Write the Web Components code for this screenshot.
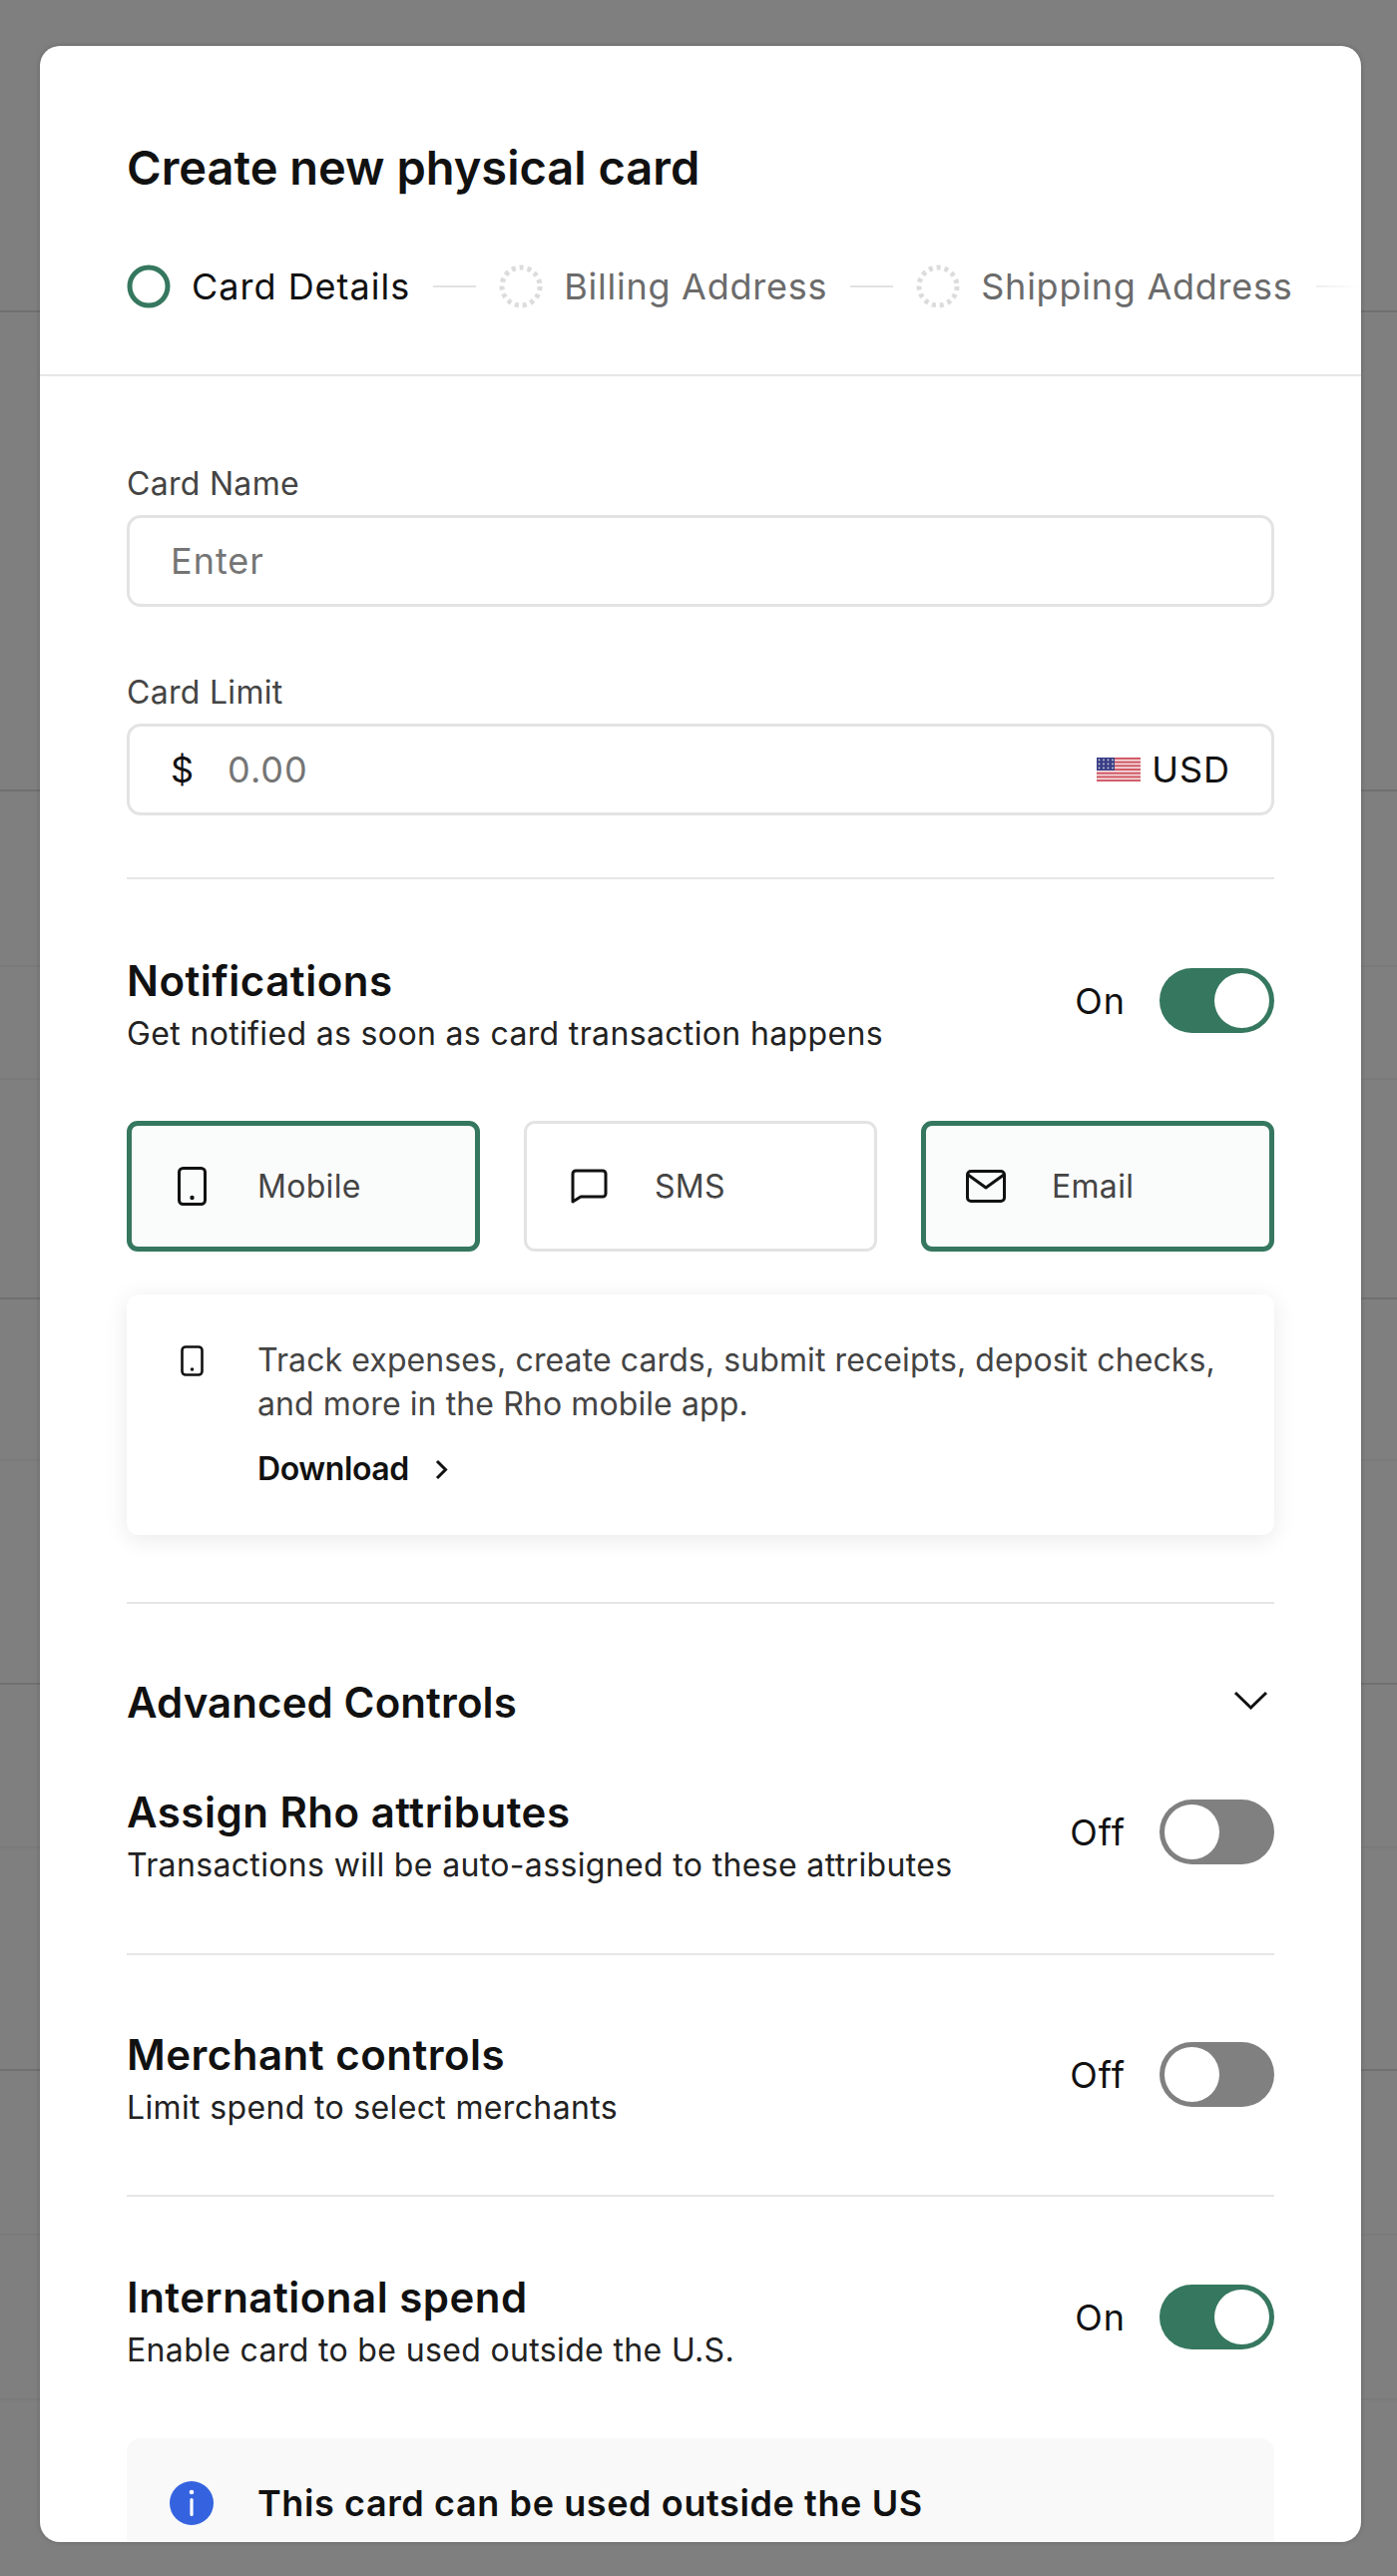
<!DOCTYPE html>
<html lang="en">
<head>
<meta charset="utf-8">
<title>Create new physical card</title>
<style>
  html, body { margin: 0; padding: 0; }
  body { font-family: Inter, "Liberation Sans", sans-serif; color: #111; }
  .rule { display: block; height: 2px; background: #e6e6e6; border: 0; margin: 0; }
</style>
</head>
<body>
<card-page>
  <page-backdrop></page-backdrop>
  <card-modal>
    <modal-header slot="header" title="Create new physical card">
      <step-item state="active" label="Card Details"></step-item>
      <step-line></step-line>
      <step-item label="Billing Address"></step-item>
      <step-line></step-line>
      <step-item label="Shipping Address"></step-item>
      <step-line fade></step-line>
    </modal-header>

    <form-field label="Card Name" placeholder="Enter" style="margin-top:86px"></form-field>
    <form-field label="Card Limit" placeholder="0.00" prefix="$" currency="USD" style="margin-top:64px"></form-field>
    <hr class="rule" style="margin-top:62px">

    <setting-row heading="Notifications" sub="Get notified as soon as card transaction happens" on style="margin-top:77px"></setting-row>
    <channel-group style="margin-top:65px">
      <channel-box selected label="Mobile"><svg slot="icon" width="29" height="39" viewBox="0 0 29 39" fill="none" stroke="#111" stroke-width="3"><rect x="1.5" y="1.5" width="26" height="36" rx="4"/><circle cx="14.5" cy="31" r="2.2" fill="#111" stroke="none"/></svg></channel-box>
      <channel-box label="SMS"><svg slot="icon" width="37" height="35" viewBox="0 0 37 35" fill="none" stroke="#111" stroke-width="3" stroke-linejoin="round"><path d="M2 5a3 3 0 0 1 3-3h27a3 3 0 0 1 3 3v20a3 3 0 0 1-3 3H10l-8 5z"/></svg></channel-box>
      <channel-box selected label="Email"><svg slot="icon" width="40" height="33" viewBox="0 0 40 33" fill="none" stroke="#111" stroke-width="3" stroke-linejoin="round"><rect x="1.5" y="1.5" width="37" height="30" rx="3.5"/><path d="M2 5l18 13L38 5"/></svg></channel-box>
    </channel-group>
    <app-promo style="margin-top:43px">
      Track expenses, create cards, submit receipts, deposit checks, and more in the Rho mobile app.
    </app-promo>
    <hr class="rule" style="margin-top:67px">

    <section-toggle heading="Advanced Controls" style="margin-top:74px"></section-toggle>
    <setting-row heading="Assign Rho attributes" sub="Transactions will be auto-assigned to these attributes" style="margin-top:60px"></setting-row>
    <hr class="rule" style="margin-top:66px">
    <setting-row heading="Merchant controls" sub="Limit spend to select merchants" style="margin-top:75px"></setting-row>
    <hr class="rule" style="margin-top:65px">
    <setting-row heading="International spend" sub="Enable card to be used outside the U.S." on style="margin-top:76px"></setting-row>
    <info-alert style="margin-top:66px">This card can be used outside the US</info-alert>
  </card-modal>
</card-page>

<script>
// helper: every element gets an open shadow root from a string
class Base extends HTMLElement {
  render(html) {
    if (!this.shadowRoot) this.attachShadow({ mode: "open" });
    this.shadowRoot.innerHTML = html;
  }
  connectedCallback() { this.render(this.markup()); }
}

customElements.define("card-page", class extends Base {
  markup() {
    return `<style>
      :host { display: block; position: relative; width: 1400px; height: 2581px; overflow: hidden; background: #7f7f7f; }
    </style><slot></slot>`;
  }
});

customElements.define("page-backdrop", class extends Base {
  markup() {
    // table rows of the page behind the overlay
    const rows = [[313, 1], [793, 1], [969, 0], [1082, 0], [1302, 1], [1464, 0], [1688, 1], [1852, 0], [2075, 1], [2240, 0], [2405, 0]];
    let prev = 0, out = "";
    for (const [y, strong] of rows) {
      out += `<div class="${strong ? "s" : "f"}" style="height:${y - prev}px"></div>`;
      prev = y;
    }
    return `<style>
      :host { display: block; }
      div { box-sizing: border-box; border-bottom: 2px solid; }
      .s { border-color: #707070; }
      .f { border-color: #7a7a7a; }
    </style>${out}`;
  }
});

customElements.define("card-modal", class extends Base {
  markup() {
    return `<style>
      :host { display: block; position: absolute; left: 40px; top: 46px; width: 1324px; height: 2501px;
        overflow: hidden; background: #fff; border-radius: 20px; box-shadow: 0 0 5px rgba(0,0,0,.22); }
      .body { padding: 0 87px; display: flow-root; }
    </style>
    <slot name="header"></slot>
    <div class="body"><slot></slot></div>`;
  }
});

customElements.define("modal-header", class extends Base {
  markup() {
    return `<style>
      :host { display: block; padding: 92px 0 66px 87px; border-bottom: 2px solid #e6e6e6; }
      h2 { margin: 0 0 67px; font: 600 47px/60px Inter, sans-serif; color: #111; }
      .steps { display: flex; align-items: center; gap: 23px; height: 44px; white-space: nowrap; }
    </style>
    <h2>${this.getAttribute("title")}</h2>
    <div class="steps"><slot></slot></div>`;
  }
});

customElements.define("step-item", class extends Base {
  markup() {
    const active = this.getAttribute("state") === "active";
    const ring = active
      ? `<circle cx="22" cy="22" r="19" fill="none" stroke="#35775f" stroke-width="5"/>`
      : `<circle cx="22" cy="22" r="19" fill="none" stroke="#dcdcdc" stroke-width="5" stroke-dasharray="4 3.96"/>`;
    return `<style>
      :host { display: flex; align-items: center; gap: 21px; font: 400 36px/44px Inter, sans-serif;
        letter-spacing: ${active ? "1px" : ".75px"}; color: ${active ? "#111" : "#6b6b6b"}; }
      svg { display: block; flex: none; }
    </style>
    <svg width="44" height="44" viewBox="0 0 44 44">${ring}</svg><span>${this.getAttribute("label")}</span>`;
  }
});

customElements.define("step-line", class extends Base {
  markup() {
    return `<style>
      :host { display: block; flex: none; width: 43px; height: 2px;
        background: ${this.hasAttribute("fade") ? "linear-gradient(90deg,#eee,#fff)" : "#e2e2e2"}; }
    </style>`;
  }
});

customElements.define("form-field", class extends Base {
  markup() {
    const prefix = this.getAttribute("prefix");
    const cur = this.getAttribute("currency");
    return `<style>
      :host { display: block; }
      label { display: block; font: 400 32px/44px Inter, sans-serif; letter-spacing: .3px; color: #444; margin-bottom: 9px; }
      .box { box-sizing: border-box; height: 92px; border: 3px solid #e3e3e3; border-radius: 14px;
        display: flex; align-items: center; padding: 0 41px; font: 400 36px/44px Inter, sans-serif; letter-spacing: 1px; }
      .pre { color: #111; margin-right: 33px; }
      .ph { color: #757575; flex: 1; }
      .cur { display: flex; align-items: center; gap: 11px; color: #111; }
      svg { display: block; }
    </style>
    <label>${this.getAttribute("label")}</label>
    <div class="box">
      ${prefix ? `<span class="pre">${prefix}</span>` : ""}
      <span class="ph">${this.getAttribute("placeholder")}</span>
      ${cur ? `<span class="cur"><us-flag></us-flag>${cur}</span>` : ""}
    </div>`;
  }
});

customElements.define("us-flag", class extends Base {
  markup() {
    let stripes = "";
    for (let i = 0; i < 7; i++) stripes += `<rect y="${i * 3.7}" width="44" height="1.85" fill="#d0525f"/>`;
    let stars = "";
    for (let r = 0; r < 3; r++) for (let c = 0; c < 4; c++) stars += `<circle cx="${2.5 + c * 4.5}" cy="${2.4 + r * 4}" r=".9" fill="#cfd3e6"/>`;
    return `<style>:host { display: block; width: 44px; height: 24px; } svg { display: block; }</style>
    <svg width="44" height="24" viewBox="0 0 44 24"><rect width="44" height="24" fill="#f2dadc"/>${stripes}<rect width="18" height="13" fill="#3a3f86"/>${stars}</svg>`;
  }
});

customElements.define("toggle-switch", class extends Base {
  markup() {
    const on = this.hasAttribute("on");
    return `<style>
      :host { display: block; box-sizing: border-box; width: 115px; height: 65px; padding: 5px; border-radius: 33px;
        background: ${on ? "#35775f" : "#808080"}; }
      .wrap { display: flex; justify-content: ${on ? "flex-end" : "flex-start"}; }
      i { display: block; width: 55px; height: 55px; border-radius: 50%; background: #fff; }
    </style><div class="wrap"><i></i></div>`;
  }
});

customElements.define("setting-row", class extends Base {
  markup() {
    const on = this.hasAttribute("on");
    return `<style>
      :host { display: flex; justify-content: space-between; align-items: center; }
      h3 { margin: 0 0 6px; font: 600 42px/50px Inter, sans-serif; letter-spacing: .5px; color: #111; }
      p { margin: 0; font: 400 32px/44px Inter, sans-serif; letter-spacing: .35px; color: #222; }
      .ctl { display: flex; align-items: center; gap: 34px; margin-bottom: 11px; font: 400 36px/44px Inter, sans-serif; letter-spacing: 1px; color: #111; }
    </style>
    <div><h3>${this.getAttribute("heading")}</h3><p>${this.getAttribute("sub")}</p></div>
    <div class="ctl"><span>${on ? "On" : "Off"}</span><toggle-switch ${on ? "on" : ""}></toggle-switch></div>`;
  }
});

customElements.define("channel-group", class extends Base {
  markup() {
    return `<style>
      :host { display: grid; grid-template-columns: repeat(3, 1fr); gap: 44px; }
    </style><slot></slot>`;
  }
});

customElements.define("channel-box", class extends Base {
  markup() {
    const sel = this.hasAttribute("selected");
    return `<style>
      :host { display: flex; align-items: center; box-sizing: border-box; height: 131px;
        border: ${sel ? "5px solid #35775f" : "3px solid #e3e3e3"}; border-radius: 11px;
        background: ${sel ? "#fafbfb" : "#fff"}; padding-left: ${sel ? 30 : 32}px;
        font: 400 32px/44px Inter, sans-serif; letter-spacing: .3px; color: #444; }
      .ic { width: 60px; margin-right: 36px; flex: none; display: flex; justify-content: center; align-items: center; }
    </style><span class="ic"><slot name="icon"></slot></span><span>${this.getAttribute("label")}</span>`;
  }
});

customElements.define("app-promo", class extends Base {
  markup() {
    return `<style>
      :host { display: grid; grid-template-columns: 131px 1fr; height: 241px; box-sizing: border-box; padding: 44px 30px 0 0;
        background: #fff; border-radius: 12px; box-shadow: 0 4px 24px rgba(0,0,0,.09); }
      svg { display: block; margin: 7px 0 0 54px; }
      p { margin: 0; font: 400 32px/44px Inter, sans-serif; letter-spacing: .1px; color: #444; }
      a { display: flex; align-items: center; gap: 26px; margin-top: 21px; font: 600 32px/44px Inter, sans-serif; letter-spacing: -.4px; color: #111; }
    </style>
    <svg width="23" height="31" viewBox="0 0 23 31" fill="none" stroke="#111" stroke-width="2.6"><rect x="1.5" y="1.5" width="20" height="28" rx="3.5"/><circle cx="11.5" cy="24" r="1.8" fill="#111" stroke="none"/></svg>
    <div><p><slot></slot></p>
      <a>Download <svg style="margin:0" width="13" height="21" viewBox="0 0 13 21" fill="none" stroke="#111" stroke-width="3"><path d="M2 2l8.5 8.5L2 19"/></svg></a>
    </div>`;
  }
});

customElements.define("section-toggle", class extends Base {
  markup() {
    return `<style>
      :host { display: flex; justify-content: space-between; align-items: center; }
      h3 { margin: 0; font: 600 42px/50px Inter, sans-serif; letter-spacing: .1px; color: #111; }
      svg { display: block; margin: 0 6px 5px 0; }
    </style>
    <h3>${this.getAttribute("heading")}</h3>
    <svg width="35" height="19" viewBox="0 0 35 19" fill="none" stroke="#111" stroke-width="3"><path d="M2 2l15.5 15L33 2"/></svg>`;
  }
});

customElements.define("info-alert", class extends Base {
  markup() {
    return `<style>
      :host { display: flex; align-items: flex-start; gap: 44px; height: 200px; box-sizing: border-box;
        padding: 43px 0 0 43px; background: #f9f9f9; border-radius: 14px;
        font: 600 36px/44px Inter, sans-serif; letter-spacing: .6px; color: #111; }
      svg { display: block; flex: none; }
    </style>
    <svg width="44" height="44" viewBox="0 0 44 44"><circle cx="22" cy="22" r="22" fill="#3563e0"/><circle cx="22" cy="11" r="2.3" fill="#fff"/><rect x="20.4" y="17" width="3.2" height="18" rx="1.6" fill="#fff"/></svg>
    <span><slot></slot></span>`;
  }
});
</script>
</body>
</html>
